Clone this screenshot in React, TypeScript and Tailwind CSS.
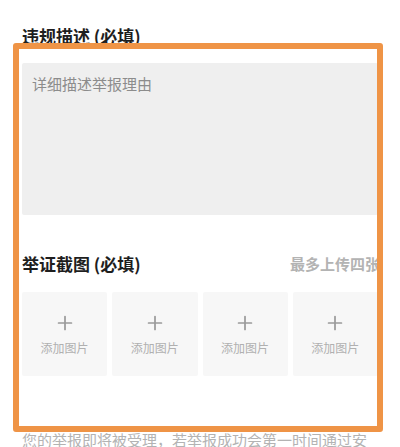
import { Plus } from "lucide-react"

const tiles = [0, 1, 2, 3]

export default function App() {
  return (
    <div className="relative h-[447px] w-[400px] overflow-hidden bg-white px-[22px] font-['Noto_Sans_CJK_SC','Noto_Sans',sans-serif]">
      {/* Description */}
      <div className="pt-[25px] text-[17px] font-bold leading-[22px] text-[#1e1e1e]">违规描述 (必填)</div>
      <div className="mt-[16px] h-[152px] rounded-[2px] bg-[#efefef] px-[10px] pt-[11px]">
        <div className="text-[15px] leading-[20px] text-[#8c8c8c]">详细描述举报理由</div>
      </div>

      {/* Screenshots */}
      <div className="mt-[38px] flex h-[22px] items-center justify-between">
        <div className="text-[17px] font-bold leading-[22px] text-[#1e1e1e]">举证截图 (必填)</div>
        <div className="mr-[-2px] text-[15px] font-bold leading-[22px] text-[#b3b3b3]">最多上传四张</div>
      </div>
      <div className="mt-[17px] grid grid-cols-4 gap-[5px]">
        {tiles.map((i) => (
          <div key={i} className="flex h-[84px] flex-col items-center rounded-[2px] bg-[#f7f7f7] pt-[20px]">
            <Plus className="h-[22px] w-[22px] text-[#9a9a9a]" strokeWidth={1.9} />
            <div className="mt-[6px] text-[12px] leading-[16px] text-[#b0b0b0]">添加图片</div>
          </div>
        ))}
      </div>

      <div className="mt-[54px] text-[15px] leading-[20px] text-[#b3b3b3]">
        您的举报即将被受理，若举报成功会第一时间通过安全中心通知您
      </div>

      {/* Highlight frame */}
      <div className="pointer-events-none absolute left-[13px] top-[43px] h-[389px] w-[370px] rounded-[3px] border-[6px] border-[#ef9446]" />
    </div>
  )
}
